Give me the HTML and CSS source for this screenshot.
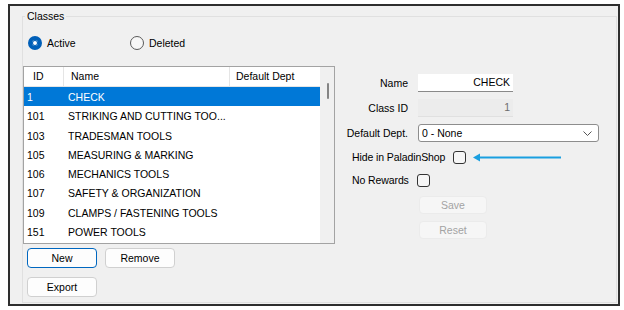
FILE: index.html
```html
<!DOCTYPE html>
<html lang="en">
<head>
    <meta charset="UTF-8">
    <meta name="viewport" content="width=device-width, initial-scale=1.0">
    <title>Classes</title>
    <link rel="stylesheet" href="styles.css">
</head>
<body>
    <div class="window">
        <fieldset class="group">
            <legend>Classes</legend>
            <div class="radios">
                <label class="radio first"><span class="dot on"></span>Active</label>
                <label class="radio"><span class="dot"></span>Deleted</label>
            </div>
            <div class="content">
                <div class="left">
                    <div class="list">
                        <div class="list-main">
                            <div class="list-head">
                                <div class="col-id">ID</div>
                                <div class="col-name">Name</div>
                                <div class="col-dept">Default Dept</div>
                            </div>
                            <div class="row selected"><div class="c-id">1</div><div class="c-name">CHECK</div></div>
                            <div class="row"><div class="c-id">101</div><div class="c-name">STRIKING AND CUTTING TOO...</div></div>
                            <div class="row"><div class="c-id">103</div><div class="c-name">TRADESMAN TOOLS</div></div>
                            <div class="row"><div class="c-id">105</div><div class="c-name">MEASURING &amp; MARKING</div></div>
                            <div class="row"><div class="c-id">106</div><div class="c-name">MECHANICS TOOLS</div></div>
                            <div class="row"><div class="c-id">107</div><div class="c-name">SAFETY &amp; ORGANIZATION</div></div>
                            <div class="row"><div class="c-id">109</div><div class="c-name">CLAMPS / FASTENING TOOLS</div></div>
                            <div class="row"><div class="c-id">151</div><div class="c-name">POWER TOOLS</div></div>
                        </div>
                        <div class="scrollbar"><div class="thumb"></div></div>
                    </div>
                    <div class="btn-row">
                        <button class="btn focus">New</button>
                        <button class="btn">Remove</button>
                    </div>
                    <div class="btn-row second">
                        <button class="btn">Export</button>
                    </div>
                </div>

                <div class="form">
                    <div class="field">
                        <label>Name</label>
                        <div class="input">CHECK</div>
                    </div>
                    <div class="field">
                        <label>Class ID</label>
                        <div class="input disabled">1</div>
                    </div>
                    <div class="field">
                        <label>Default Dept.</label>
                        <div class="select">
                            <span>0 - None</span>
                            <svg width="9" height="5" viewBox="0 0 9 5"><polyline points="0.5,0.5 4.5,4.5 8.5,0.5" fill="none" stroke="#555" stroke-width="1"/></svg>
                        </div>
                    </div>
                    <div class="check-row first">
                        <span>Hide in PaladinShop</span>
                        <span class="box"></span>
                        <svg class="arrow" width="88" height="9" viewBox="0 0 88 9">
                            <line x1="4" y1="4.5" x2="88" y2="4.5" stroke="#1a9fe0" stroke-width="2"/>
                            <polygon points="0,4.5 7,0.5 7,8.5" fill="#1a9fe0"/>
                        </svg>
                    </div>
                    <div class="check-row">
                        <span>No Rewards</span>
                        <span class="box"></span>
                    </div>
                    <button class="btn off save">Save</button>
                    <button class="btn off reset">Reset</button>
                </div>
            </div>
        </fieldset>
    </div>
</body>
</html>
```

FILE: styles.css
```css
body {
    margin: 0;
    background-color: #fff;
    font-family: 'Liberation Sans', Arial, sans-serif;
    font-size: 10.5px;
    color: #000;
}
.window {
    margin: 4px 0 0 8px;
    width: 612px;
    height: 302px;
    box-sizing: border-box;
    border: 2px solid #2e2e2e;
    background-color: #f0f0f0;
    padding: 3px 0 0 12px;
}
.group {
    margin: 0;
    padding: 0;
    width: 595px;
    height: 294px;
    box-sizing: border-box;
    border: 1px solid #e0e0e0;
    min-width: 0;
}
.group legend {
    padding: 0 2px;
    margin-left: 2px;
    line-height: 15px;
}
.radios {
    display: flex;
    height: 14px;
    margin-top: 12px;
    padding-left: 5px;
}
.radio {
    display: flex;
    align-items: center;
    gap: 5px;
}
.radio.first {
    width: 102px;
}
.dot {
    width: 12px;
    height: 12px;
    border-radius: 50%;
    border: 1px solid #5a5a5a;
    background-color: #f7f7f7;
    box-sizing: content-box;
}
.dot.on {
    width: 4px;
    height: 4px;
    border: 4px solid #005fb8;
    background-color: #fff;
    padding: 1px;
    background-clip: content-box;
    box-shadow: inset 0 0 0 1px #005fb8;
}
.content {
    display: flex;
    margin-top: 16px;
}
.left {
    width: 312px;
}
.list {
    display: flex;
    height: 178px;
    box-sizing: border-box;
    border: 1px solid #a3a3a3;
    background-color: #fff;
}
.list-main {
    width: 296px;
    overflow: hidden;
}
.list-head {
    display: flex;
    height: 20px;
    box-sizing: border-box;
    border-bottom: 1px solid #e5e5e5;
    line-height: 19px;
}
.col-id {
    width: 40px;
    padding-left: 9px;
    box-sizing: border-box;
    border-right: 1px solid #e5e5e5;
}
.col-name {
    width: 166px;
    padding-left: 7px;
    box-sizing: border-box;
    border-right: 1px solid #e5e5e5;
}
.col-dept {
    padding-left: 6px;
}
.row {
    display: flex;
    height: 19.3px;
    line-height: 20px;
    white-space: nowrap;
}
.row.selected {
    background-color: #0078d7;
    color: #fff;
}
.c-id {
    width: 40px;
    padding-left: 3px;
    box-sizing: border-box;
}
.c-name {
    padding-left: 4px;
}
.scrollbar {
    width: 14px;
    background-color: #f0f0f0;
}
.thumb {
    width: 2px;
    height: 16px;
    margin: 16px 0 0 7px;
    border-radius: 1px;
    background-color: #858585;
}
.btn-row {
    display: flex;
    gap: 8px;
    margin: 4px 0 0 4px;
}
.btn-row.second {
    margin-top: 9px;
}
.btn {
    width: 70px;
    height: 20px;
    padding: 0;
    font-family: inherit;
    font-size: inherit;
    color: #000;
    background-color: #fdfdfd;
    border: 1px solid #d0d0d0;
    border-radius: 4px;
}
.btn.focus {
    border-color: #0067c0;
}
.form {
    margin-left: 5px;
    padding-top: 8px;
    display: flex;
    flex-direction: column;
}
.field {
    display: flex;
    align-items: center;
    height: 18px;
    margin-bottom: 7px;
}
.field label {
    width: 68px;
    margin-right: 10px;
    text-align: right;
}
.input {
    width: 95px;
    height: 18px;
    box-sizing: border-box;
    padding-right: 3px;
    line-height: 17px;
    text-align: right;
    background-color: #fff;
    border-bottom: 1px solid #8a8a8a;
}
.input.disabled {
    background-color: #ececec;
    border-bottom-color: #e0e0e0;
    color: #6d6d6d;
}
.select {
    display: flex;
    align-items: center;
    justify-content: space-between;
    width: 181px;
    height: 18px;
    box-sizing: border-box;
    padding: 0 6px 0 3px;
    background-color: #fff;
    border: 1px solid #8d8d8d;
    border-radius: 3px;
}
.check-row {
    display: flex;
    align-items: center;
    gap: 8px;
    height: 14px;
    margin: 1px 0 0 12px;
    letter-spacing: -0.1px;
}
.check-row + .check-row {
    margin-top: 9px;
}
.box {
    width: 11px;
    height: 11px;
    border: 1px solid #333;
    border-radius: 3px;
    background-color: #f6f6f6;
}
.arrow {
    margin-left: -1px;
}
.btn.off {
    width: 68px;
    height: 18px;
    margin-left: 79px;
    color: #a3a3a3;
    background-color: #f6f6f6;
    border-color: #ebebeb;
}
.save {
    margin-top: 9px;
}
.reset {
    margin-top: 7px;
}
```
